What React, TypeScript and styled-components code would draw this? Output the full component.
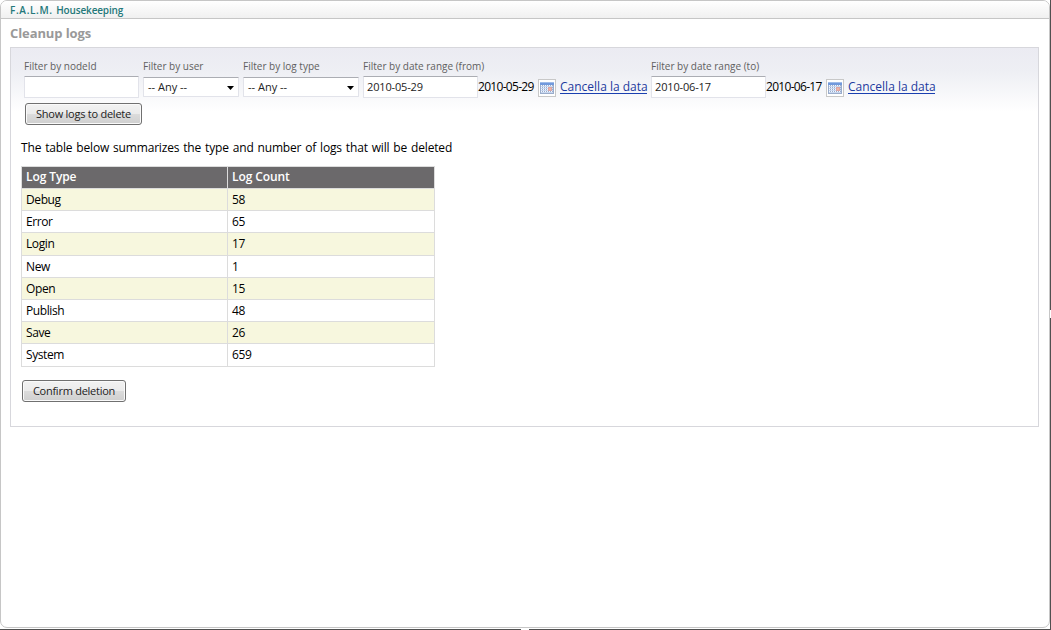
import React from "react";
import styled, { createGlobalStyle } from "styled-components";

const GlobalStyle = createGlobalStyle`
  * { box-sizing: border-box; }
  body { margin: 0; background: #fff; font-family: "Trebuchet MS", "Open Sans", sans-serif; color: #000; }
`;

const Shell = styled.div`
  display: grid;
  grid-template-columns: 1050px 1px;
  grid-template-rows: 628px 1px 1px;
  width: 1051px;
  height: 630px;
  overflow: hidden;
`;

const Frame = styled.main`
  width: 1050px;
  height: 628px;
  border: 1px solid #c6c6c6;
  border-radius: 7px;
  overflow: hidden;
`;

const SideEdge = styled.div`
  grid-column: 2;
  grid-row: 1 / 4;
  background: linear-gradient(#505050 310px, #fff 310px, #fff 318px, #505050 318px);
`;

const BottomEdge = styled.div`
  grid-column: 1;
  grid-row: 3;
  background: linear-gradient(90deg, #505050 521px, #fff 521px, #fff 529px, #505050 529px);
`;

const TitleBar = styled.header`
  height: 18px;
  padding-left: 9px;
  border-bottom: 1px solid #c6c6c6;
  background: linear-gradient(#fff, #f0f0f0);
  color: #24787a;
  font-size: 10px;
  font-weight: 600;
  line-height: 19px;
  letter-spacing: -0.15px;
  word-spacing: 1px;
`;

const Acronym = styled.span`
  letter-spacing: 0.65px;
`;

const Heading = styled.h1`
  margin: 0;
  height: 28px;
  padding-left: 9px;
  color: #999;
  font-size: 13px;
  font-weight: 700;
  line-height: 29px;
  letter-spacing: -0.1px;
`;

const Panel = styled.section`
  width: 1029px;
  height: 380px;
  margin-left: 9px;
  border: 1px solid #d7d7dc;
  background: linear-gradient(#ebebf2, #eeeff4 24px, #fff 64px);
`;

const Filters = styled.div`
  display: flex;
  height: 50px;
  padding: 12px 0 0 13px;
`;

const Field = styled.div<{ $width: number }>`
  width: ${(p) => p.$width}px;
  flex: none;
`;

const Label = styled.label`
  display: block;
  height: 16px;
  color: #606060;
  font-size: 10px;
  line-height: 12px;
  white-space: nowrap;
`;

const Controls = styled.div`
  display: flex;
  align-items: flex-start;
`;

const Input = styled.input`
  display: block;
  width: 115px;
  height: 22px;
  margin: 0;
  padding: 0 0 2px 3px;
  border: 1px solid #e2e3ea;
  border-top-color: #abadb3;
  border-radius: 1px;
  background: #fff;
  color: #222;
  font: 11px "Trebuchet MS", "Open Sans", sans-serif;
  letter-spacing: -0.15px;
`;

const SelectBox = styled.div<{ $width: number }>`
  display: flex;
  align-items: center;
  justify-content: space-between;
  width: ${(p) => p.$width}px;
  height: 20px;
  margin-top: 1px;
  padding: 0 4px;
  border: 1px solid #e2e3ea;
  border-top-color: #abadb3;
  border-radius: 1px;
  background: #fff;
  color: #222;
  font-size: 11px;
  line-height: 18px;
`;

const Arrow = styled.svg`
  display: block;
  width: 7px;
  height: 4px;
  margin-top: 2px;
`;

const DateText = styled.span`
  width: 60px;
  font-size: 12px;
  line-height: 21px;
  letter-spacing: -0.7px;
  white-space: nowrap;
`;

const CalendarButton = styled.span`
  width: 18px;
  height: 18px;
  margin: 3px 4px 0 0;
  padding: 2px 1px;
  border: 1px solid #c8c8c8;
  background: #fff;
`;

const CalendarDrawing = styled.svg`
  display: block;
`;

const ClearLink = styled.a`
  height: 18px;
  width: 87px;
  border-bottom: 1px solid #1a3fb0;
  color: #1c3a9e;
  font-size: 12px;
  line-height: 21px;
  white-space: nowrap;
  text-decoration: none;
`;

const Button = styled.button<{ $width: number }>`
  display: block;
  width: ${(p) => p.$width}px;
  height: 22px;
  padding: 0;
  border: 1px solid #707070;
  border-radius: 3px;
  background: linear-gradient(#f2f2f2, #ebebeb 50%, #dcdcdc 50%, #cfcfcf);
  box-shadow: inset 0 0 0 1px #fafafa;
  color: #222;
  font: 11px/18px "Trebuchet MS", "Open Sans", sans-serif;
  letter-spacing: -0.25px;
  white-space: nowrap;
`;

const ShowButton = styled(Button)`
  margin: 5px 0 0 14px;
`;

const ConfirmButton = styled(Button)`
  margin: 13px 0 0 11px;
`;

const Summary = styled.p`
  margin: 13px 0 0 10px;
  height: 28px;
  font-size: 12px;
  line-height: 19px;
  letter-spacing: -0.17px;
  word-spacing: 1px;
`;

const Table = styled.div`
  width: 414px;
  margin-left: 10px;
  border: 1px solid #dcdcdc;
`;

const Row = styled.div<{ $kind: "head" | "odd" | "even"; $height: number }>`
  display: grid;
  grid-template-columns: 206px 206px;
  height: ${(p) => p.$height}px;
  color: ${(p) => (p.$kind === "head" ? "#fff" : "#000")};
  background: ${(p) => (p.$kind === "head" ? "#6b696b" : p.$kind === "odd" ? "#f7f7de" : "#fff")};
  border-bottom: 1px solid #dcdcdc;
  font-weight: ${(p) => (p.$kind === "head" ? 600 : 400)};
  font-size: 12px;
  line-height: ${(p) => (p.$kind === "head" ? 20 : 21)}px;
  letter-spacing: ${(p) => (p.$kind === "head" ? -0.1 : -0.4)}px;
  &:last-child { border-bottom: 0; }
`;

const Cell = styled.div`
  padding-left: 4px;
  &:first-child { border-right: 1px solid #dcdcdc; }
`;

const Calendar = () => (
  <CalendarButton>
    <CalendarDrawing width="14" height="12" viewBox="0 0 14 12" shapeRendering="crispEdges">
      <rect width="14" height="12" fill="#9aaccb" />
      <rect width="14" height="3" fill="#7199dc" />
      <rect width="14" height="1" fill="#9fbbe8" />
      {[3, 5, 7, 9].map((y) =>
        [1, 3, 5, 7, 9, 11].map((x) => (
          <rect key={`${x}-${y}`} x={x} y={y} width="1" height="1" fill="#f4f8ff" />
        ))
      )}
      {[4, 6, 8, 10].map((y) => (
        <rect key={y} x="1" y={y} width="12" height="1" fill="#c9d8f0" />
      ))}
      <rect x="8" y="5" width="4" height="4" fill="#dda6a4" />
      <rect x="9" y="6" width="2" height="2" fill="#f0b5a4" />
    </CalendarDrawing>
  </CalendarButton>
);

const Select = ({ width }: { width: number }) => (
  <SelectBox $width={width}>
    <span>-- Any --</span>
    <Arrow viewBox="0 0 7 4">
      <path d="M0 0h7L3.5 4z" fill="#000" />
    </Arrow>
  </SelectBox>
);

const DateField = ({ label, value }: { label: string; value: string }) => (
  <Field $width={288}>
    <Label>{label}</Label>
    <Controls>
      <Input defaultValue={value} />
      <DateText>{value}</DateText>
      <Calendar />
      <ClearLink href="#">Cancella la data</ClearLink>
    </Controls>
  </Field>
);

const logs: [string, number, number][] = [
  ["Debug", 58, 22],
  ["Error", 65, 22],
  ["Login", 17, 23],
  ["New", 1, 22],
  ["Open", 15, 22],
  ["Publish", 48, 22],
  ["Save", 26, 22],
  ["System", 659, 22],
];

export default function App() {
  return (
    <>
      <GlobalStyle />
      <Shell>
        <Frame>
          <TitleBar>
            <Acronym>F.A.L.M.</Acronym> Housekeeping
          </TitleBar>
          <Heading>Cleanup logs</Heading>
          <Panel>
            <Filters>
              <Field $width={119}>
                <Label>Filter by nodeId</Label>
                <Input />
              </Field>
              <Field $width={100}>
                <Label>Filter by user</Label>
                <Select width={96} />
              </Field>
              <Field $width={120}>
                <Label>Filter by log type</Label>
                <Select width={116} />
              </Field>
              <DateField label="Filter by date range (from)" value="2010-05-29" />
              <DateField label="Filter by date range (to)" value="2010-06-17" />
            </Filters>
            <ShowButton $width={117}>Show logs to delete</ShowButton>
            <Summary>The table below summarizes the type and number of logs that will be deleted</Summary>
            <Table>
              <Row $kind="head" $height={22}>
                <Cell>Log Type</Cell>
                <Cell>Log Count</Cell>
              </Row>
              {logs.map(([name, count, height], i) => (
                <Row key={name} $kind={i % 2 ? "even" : "odd"} $height={height}>
                  <Cell>{name}</Cell>
                  <Cell>{count}</Cell>
                </Row>
              ))}
            </Table>
            <ConfirmButton $width={104}>Confirm deletion</ConfirmButton>
          </Panel>
        </Frame>
        <SideEdge />
        <BottomEdge />
      </Shell>
    </>
  );
}
